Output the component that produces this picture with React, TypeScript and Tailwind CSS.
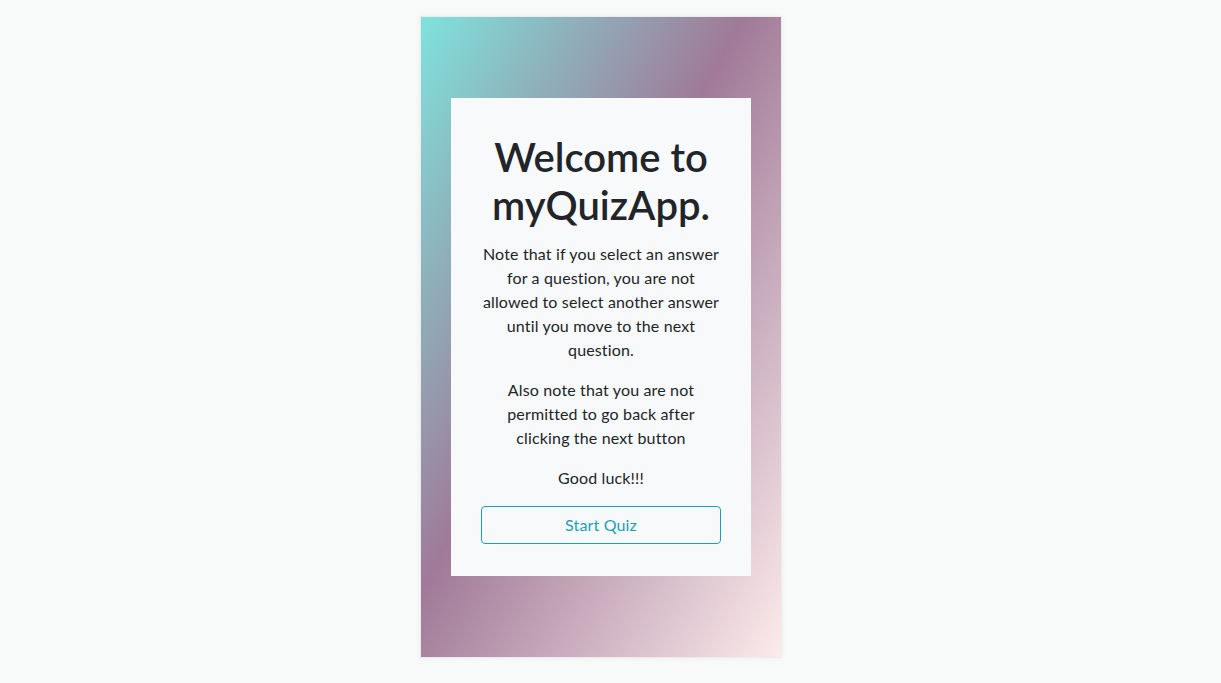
export default function App() {
  return (
    <div className="min-h-screen bg-[#f8f9f9] font-['Lato','Liberation_Sans',sans-serif] text-[#212529]">
      <div className="flex justify-center pt-[16px] pb-[25px] pr-[19px]">
        <div className="w-[362px] h-[642px] border border-[#ececec] shadow-[0_0_6px_rgba(0,0,0,0.05)] bg-[linear-gradient(to_bottom_right,#7ee3dc_0%,#a07a98_45%,#fcebeb_100%)] flex justify-center pt-[81px]">
          <div className="w-[300px] h-[478px] bg-[#f8f9fa] px-[30px] pt-[35px] text-center tracking-[0.15px]">
            <h1 className="text-[40px] leading-[48px] font-semibold tracking-normal mb-[13px]">Welcome to myQuizApp.</h1>
            <p className="text-base leading-6 mb-4">
              Note that if you select an answer for a question, you are not allowed to select another answer until you move to the next question.
            </p>
            <p className="text-base leading-6 mb-4">
              Also note that you are not permitted to go back after clicking the next button
            </p>
            <p className="text-base leading-6 mb-4">Good luck!!!</p>
            <button className="w-full h-[38px] border border-[#17a2b8] rounded text-[#17a2b8] text-base">
              Start Quiz
            </button>
          </div>
        </div>
      </div>
    </div>
  );
}
